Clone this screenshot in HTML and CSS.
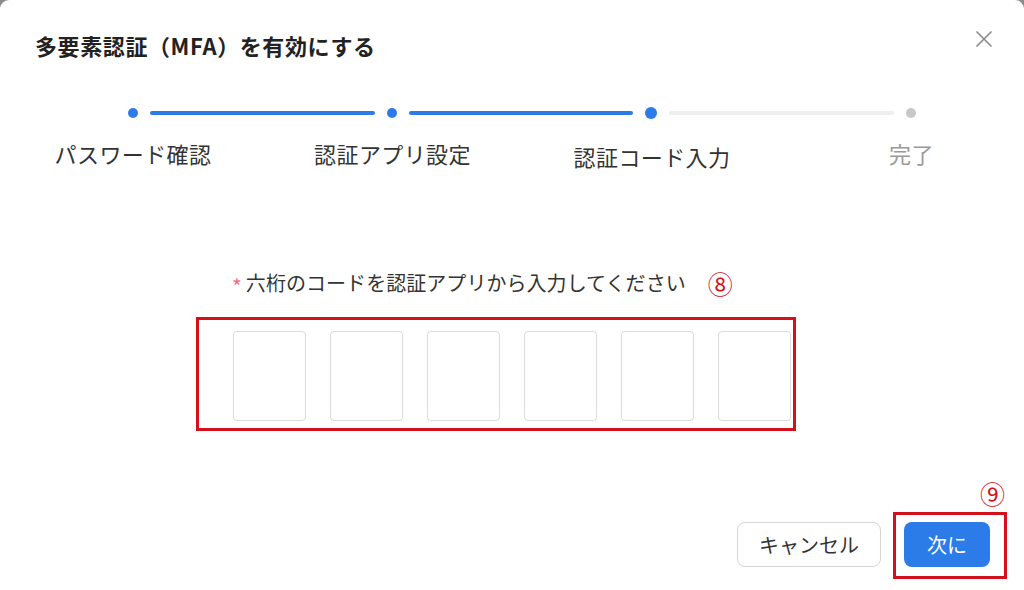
FILE: index.html
```html
<!DOCTYPE html>
<html lang="ja">
<head>
<meta charset="utf-8">
<link rel="stylesheet" href="styles.css">
</head>
<body>
<div class="modal">
  <div class="header">
    <h1 class="title">多要素認証（MFA）を有効にする</h1>
    <button class="close" aria-label="close">
      <svg width="18" height="18" viewBox="0 0 18 18"><path d="M1.5 1.5 L16.5 16.5 M16.5 1.5 L1.5 16.5" stroke="#8a8a8a" stroke-width="1.6" fill="none"/></svg>
    </button>
  </div>

  <div class="steps-track">
    <span class="dot done"></span>
    <span class="line done"></span>
    <span class="dot done"></span>
    <span class="line done"></span>
    <span class="dot current"></span>
    <span class="line"></span>
    <span class="dot"></span>
  </div>
  <div class="steps-labels">
    <span class="step-label">パスワード確認</span>
    <span class="step-label">認証アプリ設定</span>
    <span class="step-label current">認証コード入力</span>
    <span class="step-label pending">完了</span>
  </div>

  <div class="form">
    <div class="field-label"><span class="req">*</span>六桁のコードを認証アプリから入力してください<span class="anno-num num8">⑧</span></div>
    <div class="code-row">
      <input class="code" maxlength="1">
      <input class="code" maxlength="1">
      <input class="code" maxlength="1">
      <input class="code" maxlength="1">
      <input class="code" maxlength="1">
      <input class="code" maxlength="1">
    </div>
  </div>

  <div class="footer">
    <button class="btn btn-cancel">キャンセル</button>
    <button class="btn btn-next">次に</button>
  </div>

  <div class="anno-box box-code"></div>
  <div class="anno-box box-next"></div>
  <span class="anno-num num9">⑨</span>
</div>
</body>
</html>
```

FILE: styles.css
```css
html, body {
  margin: 0;
  padding: 0;
  background: #8c8c8c;
}
body {
  width: 1024px;
  height: 590px;
  overflow: hidden;
  font-family: "Noto Sans CJK JP", "Noto Sans", sans-serif;
}
.modal {
  position: relative;
  width: 1024px;
  height: 590px;
  background: #fff;
  border-radius: 9px 9px 0 0;
  display: flex;
  flex-direction: column;
  color: #333;
}
.header {
  display: flex;
  justify-content: space-between;
  align-items: center;
  padding: 31px 31px 0 35px;
  height: 28px;
}
.title {
  margin: 0;
  font-size: 22px;
  line-height: 28px;
  font-weight: 700;
  color: #222;
  letter-spacing: 0.6px;
}
.close {
  border: 0;
  background: none;
  padding: 0;
  width: 18px;
  height: 18px;
  margin-top: -12px;
  display: flex;
}
.steps-track {
  display: flex;
  align-items: center;
  margin-top: 48px;
  height: 12px;
  padding: 0 108px 0 128px;
}
.dot {
  width: 10px;
  height: 10px;
  border-radius: 50%;
  background: #c8c8c8;
  flex: none;
}
.dot.done { background: #2b7be8; }
.dot.current { width: 12px; height: 12px; background: #2b7be8; }
.line {
  flex: 1;
  height: 4px;
  border-radius: 2px;
  margin: 0 12px;
  background: #eeeeee;
}
.line.done { background: #2b7be8; }
.steps-labels {
  display: grid;
  grid-template-columns: repeat(4, 200px);
  column-gap: 59.5px;
  margin-left: 33px;
  margin-top: 19px;
}
.step-label {
  text-align: center;
  font-size: 22px;
  line-height: 30px;
  color: #333;
  letter-spacing: 0.4px;
}
.step-label.current { padding-top: 3px; }
.step-label.pending { color: #999; }
.form {
  display: flex;
  flex-direction: column;
  align-items: center;
  margin-top: 97px;
}
.field-label {
  align-self: flex-start;
  margin-left: 232px;
  font-size: 20px;
  line-height: 30px;
  height: 30px;
  color: #333;
  display: flex;
  align-items: center;
  letter-spacing: 0.05px;
}
.req {
  color: #f07078;
  font-size: 21px;
  margin-right: 4px;
  padding-top: 6px;
}
.anno-num {
  color: #d4111b;
  font-size: 25px;
  line-height: 26px;
}
.num8 { margin-left: 22px; }
.code-row {
  display: flex;
  gap: 24px;
  margin-top: 33px;
}
.code {
  width: 73px;
  height: 90px;
  box-sizing: border-box;
  border: 1px solid #dcdcdc;
  border-radius: 4px;
  background: #fff;
  padding: 0;
  outline: none;
}
.footer {
  display: flex;
  justify-content: flex-end;
  gap: 23px;
  margin-top: 101px;
  padding-right: 34px;
}
.btn {
  height: 45px;
  border-radius: 8px;
  font-family: inherit;
  font-size: 20px;
  box-sizing: border-box;
  cursor: pointer;
}
.btn-cancel {
  width: 144px;
  border: 1px solid #d6d6d6;
  background: #fff;
  color: #333;
}
.btn-next {
  width: 86px;
  border: 0;
  background: #2b7be8;
  color: #fff;
}
.anno-box {
  position: absolute;
  border: 3px solid #d4111b;
  box-sizing: border-box;
}
.box-code { left: 196px; top: 317px; width: 600px; height: 114px; }
.box-next { left: 893px; top: 512px; width: 114px; height: 67px; }
.num9 { position: absolute; left: 980px; top: 480px; }
```
